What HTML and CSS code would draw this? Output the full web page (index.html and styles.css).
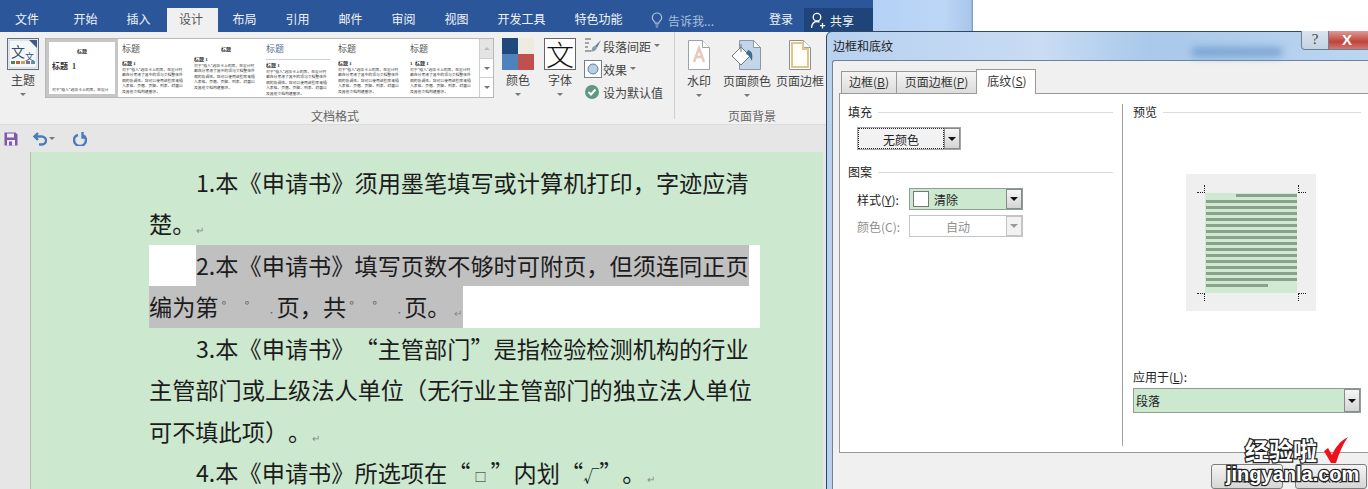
FILE: index.html
```html
<!DOCTYPE html>
<html lang="zh-CN">
<head>
    <meta charset="UTF-8">
    <title>边框和底纹</title>
    <link rel="stylesheet" href="styles.css">
</head>
<body>
    <div class="screen">
        <div class="word">
            <div class="tabs">
                <span class="tab tab-file">文件</span>
                <span class="tab">开始</span>
                <span class="tab">插入</span>
                <span class="tab active">设计</span>
                <span class="tab">布局</span>
                <span class="tab">引用</span>
                <span class="tab">邮件</span>
                <span class="tab">审阅</span>
                <span class="tab">视图</span>
                <span class="tab tab-wide">开发工具</span>
                <span class="tab tab-wide">特色功能</span>
                <span class="tell">
                    <svg width="12" height="16" viewBox="0 0 12 16"><path d="M6 1a4.6 4.6 0 0 0-2.6 8.4c.6.5.8 1 .8 1.8h3.6c0-.8.2-1.3.8-1.8A4.6 4.6 0 0 0 6 1zM4.4 13h3.2M4.8 15h2.4" fill="none" stroke="#a9bfdc" stroke-width="1.2"/></svg>
                    告诉我...
                </span>
                <span class="login">登录</span>
                <span class="share">
                    <svg width="17" height="17" viewBox="0 0 17 17"><path d="M7 9a3.6 3.6 0 1 0 0-7.6A3.6 3.6 0 0 0 7 9zM1.5 16c.4-4 2.500-6.500 5.500-6.500 1 0 1.800.2 2.500.7M12.500 11v5.500M10 13.700h5.200" fill="none" stroke="#fff" stroke-width="1.300"/></svg>
                    共享
                </span>
            </div>

            <div class="ribbon">
                <div class="group group-format">
                    <div class="group-row">
                        <div class="cmd cmd-theme">
                            <svg class="cmd-icon" width="32" height="32" viewBox="0 0 32 32">
                                <rect x=".5" y=".5" width="31" height="31" fill="#fff" stroke="#5f6f7f"/>
                                <rect x="2" y="2" width="28" height="28" fill="#f4f7fa" stroke="#9fb0c0" stroke-width=".6"/>
                                <path d="M22 2h8v8z" fill="#3c5a85"/>
                                <text x="4" y="19" class="theme-big">文</text>
                                <text x="18" y="22" class="theme-small">文</text>
                                <rect x="4" y="23" width="4" height="3" fill="#5d7f4e"/>
                                <rect x="9" y="23" width="4" height="3" fill="#b65f4c"/>
                                <rect x="14" y="23" width="4" height="3" fill="#c9a24d"/>
                                <rect x="19" y="23" width="4" height="3" fill="#7b6a98"/>
                                <rect x="24" y="23" width="4" height="3" fill="#5d8fa6"/>
                            </svg>
                            <span class="cmd-label">主题</span>
                            <i class="caret"></i>
                        </div>
                        <div class="gallery">
                            <div class="thumb thumb-on">
                                <b class="t-center">标题</b>
                                <b class="t-h1 t-wide">标题 &nbsp;1</b>
                                <p class="t-body t-foot">对于“插入”选项卡上的库&#xFF0C;在设计</p>
                            </div>
                            <div class="thumb">
                                <span class="t-title">标题</span>
                                <b class="t-h1">标题 1</b>
                                <p class="t-body">对于“插入”选项卡上的库&#xFF0C;在设计时都充分考虑了其中的项与文档整体外观的协调性。您可以使用这些库来插入表格、页眉、页脚、列表、封面以及其他文档构建基块。</p>
                            </div>
                            <div class="thumb">
                                <b class="t-center">标题</b>
                                <b class="t-h1">标题 1</b>
                                <p class="t-body">对于“插入”选项卡上的库&#xFF0C;在设计时都充分考虑了其中的项与文档整体外观的协调性。您可以使用这些库来插入表格、页眉、页脚、列表、封面以及其他文档构建基块。</p>
                            </div>
                            <div class="thumb">
                                <span class="t-title t-rule">标题</span>
                                <b class="t-h1">标题 1</b>
                                <p class="t-body">对于“插入”选项卡上的库&#xFF0C;在设计时都充分考虑了其中的项与文档整体外观的协调性。您可以使用这些库来插入表格、页眉、页脚、列表、封面以及其他文档构建基块。</p>
                            </div>
                            <div class="thumb">
                                <span class="t-title">标题</span>
                                <b class="t-h1">标题 1</b>
                                <p class="t-body">对于“插入”选项卡上的库&#xFF0C;在设计时都充分考虑了其中的项与文档整体外观的协调性。您可以使用这些库来插入表格、页眉、页脚、列表、封面以及其他文档构建基块。</p>
                            </div>
                            <div class="thumb">
                                <span class="t-title">标题</span>
                                <b class="t-h1">1 &nbsp;标题 1</b>
                                <p class="t-body">对于“插入”选项卡上的库&#xFF0C;在设计时都充分考虑了其中的项与文档整体外观的协调性。您可以使用这些库来插入表格、页眉、页脚、列表、封面以及其他文档构建基块。</p>
                            </div>
                            <div class="gallery-scroll">
                                <span class="scroll-btn scroll-top"><i class="caret caret-up"></i></span>
                                <span class="scroll-btn"><i class="caret"></i></span>
                                <span class="scroll-btn scroll-more"><i class="caret"></i></span>
                            </div>
                        </div>
                        <div class="cmd cmd-colors">
                            <div class="swatches">
                                <i class="sw-navy"></i><i class="sw-cream"></i><i class="sw-blue"></i><i class="sw-red"></i>
                            </div>
                            <span class="cmd-label">颜色</span>
                            <i class="caret"></i>
                        </div>
                        <div class="cmd cmd-font">
                            <div class="font-box">文</div>
                            <span class="cmd-label">字体</span>
                            <i class="caret"></i>
                        </div>
                        <div class="side-cmds">
                            <div class="side-cmd">
                                <svg width="18" height="18" viewBox="0 0 18 18"><path d="M1 2h6M1 6h4M1 10h3M1 14h6" stroke="#555" stroke-width="1" fill="none"/><path d="M17 3l-6 6 2 2z" fill="#6a7f96"/><path d="M11 9c-2 0-3 2-3 3s-1 2-2 2c2 1 5 1 7-3z" fill="#8a9aaa"/></svg>
                                段落间距 <i class="caret caret-inline"></i>
                            </div>
                            <div class="side-cmd side-effect">
                                <svg width="18" height="18" viewBox="0 0 18 18"><rect x=".5" y=".5" width="17" height="17" fill="#fff" stroke="#70808f"/><circle cx="9" cy="9" r="5" fill="#b9cfe6" stroke="#5e7c9e"/></svg>
                                效果 <i class="caret caret-inline"></i>
                            </div>
                            <div class="side-cmd side-default">
                                <svg width="16" height="16" viewBox="0 0 16 16"><circle cx="8" cy="8" r="7" fill="#5f9684"/><path d="M4.500 8l2.500 2.500 4.500-5" fill="none" stroke="#fff" stroke-width="2"/></svg>
                                设为默认值
                            </div>
                        </div>
                    </div>
                    <div class="group-name">文档格式</div>
                </div>

                <div class="group group-page">
                    <div class="group-row">
                        <div class="cmd cmd-mark">
                            <svg class="cmd-icon" width="22" height="30" viewBox="0 0 22 30"><path d="M.5.500h14l7 7v22H.5z" fill="#fff" stroke="#9aa3ac"/><path d="M14.500.500v7h7" fill="#fff" stroke="#9aa3ac"/><path d="M6 22l5-14 5 14M8 17h6" fill="none" stroke="#e9c9bd" stroke-width="2.500"/></svg>
                            <span class="cmd-label">水印</span>
                            <i class="caret"></i>
                        </div>
                        <div class="cmd cmd-pagecolor">
                            <svg class="cmd-icon" width="32" height="30" viewBox="0 0 32 30"><path d="M8.500.500h14l7 7v22h-21z" fill="#c3d5e8" stroke="#8a98a6"/><path d="M22.500.500v7h7z" fill="#fff" stroke="#8a98a6"/><path d="M1 16l9-9 9 9-9 9z" fill="#fff" stroke="#6f7a85"/><path d="M10 4v8" stroke="#6f7a85"/><path d="M17 10c4 1 5 4 4 11-2-3-3-6-6-7z" fill="#3f6b96"/></svg>
                            <span class="cmd-label">页面颜色</span>
                            <i class="caret"></i>
                        </div>
                        <div class="cmd cmd-border">
                            <svg class="cmd-icon" width="22" height="30" viewBox="0 0 22 30"><path d="M.5.500h14l7 7v22H.5z" fill="#fffdf6" stroke="#8f8f8f"/><path d="M14.500.500v7h7" fill="#fff" stroke="#9aa3ac"/><path d="M3 3h11v6h5v18H3z" fill="none" stroke="#e0c68e" stroke-width="2"/></svg>
                            <span class="cmd-label">页面边框</span>
                        </div>
                    </div>
                    <div class="group-name">页面背景</div>
                </div>
            </div>

            <div class="qat">
                <svg width="14" height="14" viewBox="0 0 14 14"><path d="M.5.500h11l2 2v11H.5z" fill="#7d5aa6"/><rect x="3" y="1.500" width="7" height="4" fill="#efe9f5"/><rect x="3" y="8" width="8" height="5.500" fill="#efe9f5"/><rect x="5" y="9.500" width="3" height="4" fill="#7d5aa6"/></svg>
                <svg class="qat-undo" width="14" height="14" viewBox="0 0 14 14"><path d="M1.500 4.500h7c3 0 4.500 2 4.500 4s-1.500 4-4 4H6M5 1L1.500 4.500 5 8" fill="none" stroke="#4a7db8" stroke-width="2.400"/></svg>
                <i class="caret caret-qat"></i>
                <svg class="qat-redo" width="14" height="14" viewBox="0 0 14 14"><path d="M5 3C2.500 3.800 1 5.800 1 8a6 6 0 0 0 12 0c0-2.200-1.500-4.200-3.500-5M9.500 0v5.500H13" fill="none" stroke="#4a7db8" stroke-width="2.400"/></svg>
            </div>

            <div class="doc">
                <div class="page">
                    <div class="line indent">1.本《申请书》须用墨笔填写或计算机打印&#xFF0C;字迹应清</div>
                    <div class="line">楚。<span class="para-mark">↵</span></div>
                    <div class="selected">
                        <div class="line indent"><span class="sel">2.本《申请书》填写页数不够时可附页&#xFF0C;但须连同正页</span></div>
                        <div class="line"><span class="sel">编为第<span class="ph">°</span><span class="ph">°</span><span class="ph ph-dot">·</span>页&#xFF0C;共<span class="ph">°</span><span class="ph">°</span><span class="ph ph-dot">·</span>页。<span class="para-mark mark-end">↵</span></span></div>
                    </div>
                    <div class="line indent">3.本《申请书》“主管部门”是指检验检测机构的行业</div>
                    <div class="line">主管部门或上级法人单位&#xFF08;无行业主管部门的独立法人单位</div>
                    <div class="line">可不填此项&#xFF09;。<span class="para-mark">↵</span></div>
                    <div class="line indent">4.本《申请书》所选项在“<span class="tiny">□</span>”内划“<span class="tiny tiny-check">√</span>”。<span class="para-mark">↵</span></div>
                </div>
            </div>
        </div>
        <div class="aero"></div>
    </div>

    <div class="dialog">
        <div class="dialog-title">
            <span>边框和底纹</span>
            <i class="title-blur"></i>
            <div class="title-btns">
                <span class="btn-help">?</span>
                <span class="btn-close">X</span>
            </div>
        </div>
        <div class="dialog-body">
            <div class="dialog-tabs">
                <span class="dtab dtab-one">边框(<u>B</u>)</span>
                <span class="dtab dtab-two">页面边框(<u>P</u>)</span>
                <span class="dtab dtab-on">底纹(<u>S</u>)</span>
            </div>
            <div class="panel">
                <div class="col-left">
                    <div class="legend">填充</div>
                    <div class="combo combo-fill">
                        <span class="combo-text focus">无颜色</span>
                        <span class="combo-btn"><i class="arrow"></i></span>
                    </div>
                    <div class="legend legend-two">图案</div>
                    <div class="field field-style">
                        <label>样式(<u>Y</u>):</label>
                        <div class="combo combo-green">
                            <span class="combo-text combo-left"><i class="chip"></i>清除</span>
                            <span class="combo-btn"><i class="arrow"></i></span>
                        </div>
                    </div>
                    <div class="field field-color">
                        <label>颜色(C):</label>
                        <div class="combo combo-off">
                            <span class="combo-text">自动</span>
                            <span class="combo-btn"><i class="arrow"></i></span>
                        </div>
                    </div>
                </div>
                <div class="col-right">
                    <div class="legend">预览</div>
                    <div class="preview">
                        <div class="preview-page">
                            <i class="crop crop-tl"></i><i class="crop crop-tr"></i><i class="crop crop-bl"></i><i class="crop crop-br"></i>
                            <i class="pl pl-first"></i><i class="pl"></i><i class="pl"></i><i class="pl"></i><i class="pl"></i>
                            <i class="pl"></i><i class="pl"></i><i class="pl"></i><i class="pl"></i><i class="pl"></i>
                            <i class="pl"></i><i class="pl"></i><i class="pl"></i><i class="pl"></i><i class="pl"></i><i class="pl pl-last"></i>
                        </div>
                    </div>
                    <label class="apply-label">应用于(<u>L</u>):</label>
                    <div class="combo combo-green combo-apply">
                        <span class="combo-text combo-left">段落</span>
                        <span class="combo-btn"><i class="arrow"></i></span>
                    </div>
                </div>
            </div>
            <div class="dialog-foot">
                <span class="push-btn push-ok">确定</span>
                <span class="push-btn push-cancel">取消</span>
            </div>
        </div>
    </div>

    <div class="watermark">
        <div class="wm-top">经验啦<svg width="24" height="27" viewBox="0 0 24 27"><path d="M0 14l4-3 4 7C11 11 16 4 24 0c-5 7-9 16-12 26H7z" fill="#f0101c"/></svg></div>
        <div class="wm-url">jingyanla.com</div>
    </div>
</body>
</html>
```

FILE: styles.css
```css
* {
    box-sizing: border-box;
}
html, body {
    margin: 0;
    height: 100%;
    overflow: hidden;
}
body {
    position: relative;
    background: #fff;
    font-family: "Noto Sans CJK SC", "Noto Sans", sans-serif;
    font-size: 12px;
    color: #444;
    text-spacing-trim: space-all;
}
i {
    font-style: normal;
}
.screen {
    display: flex;
    height: 489px;
}
.word {
    width: 873px;
    display: flex;
    flex-direction: column;
    background: #e6e6e6;
}
.aero {
    width: 100px;
    background: linear-gradient(90deg, #b4d2f6, #bcd6f6 70%, #a9c6ea 98%, #6f90bb);
}

/* ribbon tabs */
.tabs {
    height: 32px;
    background: #2b579a;
    display: flex;
    align-items: flex-end;
    color: #f0f4fa;
}
.tab {
    width: 53px;
    height: 24px;
    line-height: 22px;
    text-align: center;
    flex: none;
}
.tab-file {
    width: 54px;
    margin-right: 5px;
}
.tab-wide {
    width: 77px;
}
.tab.active {
    background: #f0f0f0;
    color: #555;
    margin-left: 2px;
    width: 51px;
    padding-right: 3px;
}
.tell {
    display: flex;
    align-items: center;
    gap: 5px;
    height: 24px;
    margin-left: 14px;
    width: 118px;
    flex: none;
    color: #a9bfdc;
}
.login {
    width: 35px;
    height: 24px;
    line-height: 22px;
    flex: none;
}
.share {
    width: 69px;
    height: 24px;
    background: #1f4479;
    display: flex;
    align-items: center;
    gap: 3px;
    padding-left: 6px;
    flex: none;
}

/* ribbon body */
.ribbon {
    height: 93px;
    background: #f0f0f0;
    display: flex;
    border-bottom: 1px solid #dcdcdc;
}
.group {
    display: flex;
    flex-direction: column;
    border-right: 1px solid #cfcfcf;
    margin-bottom: 5px;
}
.group-format {
    width: 675px;
    padding-left: 7px;
}
.group-page {
    width: 198px;
    border-right: 0;
}
.group-row {
    display: flex;
    height: 75px;
    padding-top: 6px;
    flex: none;
}
.group-name {
    text-align: center;
    color: #666;
    line-height: 16px;
    padding-right: 11px;
    margin-top: 1px;
    flex: none;
}
.group-page .group-name {
    padding-right: 44px;
}
.cmd {
    display: flex;
    flex-direction: column;
    align-items: center;
    flex: none;
}
.cmd-icon {
    display: block;
}
.cmd-label {
    line-height: 17px;
    margin-top: 1px;
    white-space: nowrap;
}
.cmd-theme {
    width: 32px;
}
.theme-big {
    font-size: 14px;
    fill: #35506e;
}
.theme-small {
    font-size: 9px;
    fill: #35506e;
}
.caret {
    display: block;
    width: 0;
    height: 0;
    border-left: 3px solid transparent;
    border-right: 3px solid transparent;
    border-top: 3px solid #777;
    margin-top: 5px;
}
.caret-up {
    border-top: 0;
    border-bottom: 3px solid #bbb;
    margin: 0;
}
.caret-inline {
    display: inline-block;
    margin: 0 0 2px 2px;
}
.caret-qat {
    margin: 0 0 0 2px;
}

/* style gallery */
.gallery {
    width: 449px;
    height: 60px;
    margin-left: 6px;
    background: #fff;
    border: 1px solid #b8b8b8;
    display: flex;
    flex: none;
}
.thumb {
    width: 72px;
    height: 58px;
    padding: 4px 4px 0;
    overflow: hidden;
    display: flex;
    flex-direction: column;
    color: #333;
    font-family: "Liberation Serif", "Noto Sans CJK SC", serif;
    flex: none;
}
.thumb-on {
    border: 3px solid #c6c6c6;
    padding: 3px 3px 0;
    position: relative;
}
.t-center {
    text-align: center;
    font-size: 5px;
    line-height: 8px;
    height: 10px;
    margin-top: 3px;
    flex: none;
}
.t-title {
    font-size: 9px;
    line-height: 12px;
    height: 17px;
    color: #555;
    flex: none;
}
.t-rule {
    border-bottom: 1px solid #c8d2dc;
    margin-bottom: 2px;
    color: #56708c;
}
.t-h1 {
    font-size: 5px;
    line-height: 7px;
    flex: none;
}
.t-wide {
    font-size: 8px;
    line-height: 14px;
    margin-top: 2px;
    margin-bottom: 14px;
}
.t-body {
    margin: 1px 0 0;
    font-size: 3.8px;
    line-height: 5.4px;
    color: #333;
    height: 27px;
    overflow: hidden;
    flex: none;
}
.t-foot {
    height: 6px;
    margin: 0;
    white-space: nowrap;
}
.gallery-scroll {
    width: 15px;
    margin-left: 1px;
    display: flex;
    flex-direction: column;
    border-left: 1px solid #cfcfcf;
}
.scroll-btn {
    flex: 1;
    display: flex;
    align-items: center;
    justify-content: center;
    border-bottom: 1px solid #cfcfcf;
}
.scroll-btn .caret {
    margin: 0;
}
.scroll-top {
    background: #e4e4e4;
}
.scroll-more {
    border-bottom: 0;
}

/* theme commands */
.cmd-colors {
    width: 32px;
    margin-left: 8px;
}
.swatches {
    width: 32px;
    height: 32px;
    display: grid;
    grid-template-columns: 1fr 1fr;
    grid-template-rows: 1fr 1fr;
}
.sw-navy { background: #1f497d; }
.sw-cream { background: #eeece1; }
.sw-blue { background: #4f81bd; }
.sw-red { background: #c0504d; }
.cmd-font {
    width: 32px;
    margin-left: 10px;
}
.font-box {
    width: 32px;
    height: 32px;
    background: #fff;
    border: 1px solid #666;
    color: #111;
    font-weight: 300;
    font-size: 28px;
    line-height: 30px;
    text-align: center;
}
.side-cmds {
    margin: -2px 0 0 8px;
    width: 90px;
    display: flex;
    flex-direction: column;
}
.side-cmd {
    display: flex;
    align-items: center;
    gap: 1px;
    height: 22px;
    white-space: nowrap;
    margin-top: -1px;
}
.side-effect {
    height: 24px;
    margin-top: 0;
}
.side-default {
    gap: 3px;
    height: 24px;
}
.cmd-mark {
    width: 48px;
    padding-top: 2px;
}
.cmd-pagecolor {
    width: 48px;
    padding-top: 2px;
}
.cmd-border {
    width: 50px;
    padding-top: 2px;
    margin-left: 4px;
}
.cmd-mark .cmd-label, .cmd-pagecolor .cmd-label, .cmd-border .cmd-label {
    margin-top: 2px;
}

/* quick access */
.qat {
    height: 27px;
    background: #e6e6e6;
    display: flex;
    align-items: center;
    padding-left: 4px;
}
.qat-undo {
    margin-left: 15px;
}
.qat-redo {
    margin-left: 18px;
}

/* document */
.doc {
    flex: 1;
    padding: 0 50px 0 30px;
    overflow: hidden;
}
.page {
    height: 100%;
    background: #cce8cf;
    border-left: 1px solid #b9b9b9;
    padding: 9.500px 0 0 118px;
    color: #1c1c1c;
    font-size: 23.2px;
}
.line {
    height: 41.5px;
    line-height: 41.5px;
    white-space: nowrap;
}
.indent {
    padding-left: 47px;
}
.selected {
    width: 611px;
    background: #fff;
}
.sel {
    display: inline-block;
    height: 41.5px;
    background: #c0c0c0;
}
.para-mark {
    font-size: 10px;
    color: #888;
    margin-left: 1px;
    vertical-align: -1px;
}
.mark-end {
    margin: 0 1px 0 3px;
}
.ph {
    display: inline-block;
    width: 23px;
    padding-left: 3px;
    font-size: 13px;
    color: #666;
    vertical-align: 5px;
    line-height: 10px;
}
.ph-dot {
    width: 12px;
    font-size: 8px;
    vertical-align: 0;
}
.tiny {
    display: inline-block;
    width: 20px;
    text-align: center;
    font-size: 12px;
    line-height: 20px;
}
.tiny-check {
    width: 16px;
    font-size: 16px;
}

/* dialog */
.dialog {
    position: absolute;
    left: 826px;
    top: 31px;
    width: 544px;
    height: 460px;
    border: 1px solid #33465c;
    border-radius: 6px 0 0 0;
    background: linear-gradient(90deg, #b7d1ef, #c8dcf3 40%, #a9c8ea 60%, #bcd6f2);
    padding: 0 0 0 5px;
    display: flex;
    flex-direction: column;
}
.dialog-title {
    height: 28px;
    position: relative;
    display: flex;
    align-items: center;
    padding: 0 0 2px 1px;
    color: #222;
}
.title-blur {
    position: absolute;
    left: 360px;
    top: 16px;
    width: 90px;
    height: 8px;
    background: #6d9ccc;
    filter: blur(4px);
}
.title-btns {
    position: absolute;
    right: 1px;
    top: -1px;
    display: flex;
    height: 19px;
    color: #444;
}
.btn-help {
    width: 28px;
    border: 1px solid #6e7f92;
    border-top: 0;
    border-radius: 0 0 0 4px;
    background: linear-gradient(#dbe4ee, #c4d2e2);
    text-align: center;
    font-family: "Liberation Serif", serif;
    font-size: 15px;
    line-height: 17px;
}
.btn-close {
    width: 39px;
    background: linear-gradient(#dc9a94, #c0433a 60%, #cf7a72);
    color: #fff;
    font-family: "Liberation Sans", sans-serif;
    font-weight: bold;
    font-size: 15px;
    line-height: 17px;
    padding-left: 13px;
    border-bottom: 1px solid #6e7f92;
}
.dialog-body {
    flex: 1;
    background: #f0f0f0;
    border: 1px solid #6f8299;
    border-right: 0;
    border-radius: 3px 0 0 0;
    padding: 8px 0 0 6px;
    display: flex;
    flex-direction: column;
    color: #222;
}
.dialog-tabs {
    height: 24px;
    display: flex;
    align-items: flex-end;
    padding-left: 2px;
    position: relative;
    z-index: 1;
}
.dtab {
    height: 22px;
    line-height: 20px;
    border: 1px solid #9a9a9a;
    border-right: 0;
    border-bottom: 0;
    background: linear-gradient(#f4f4f4, #dcdcdc);
    text-align: center;
    color: #333;
}
.dtab-one {
    width: 55px;
}
.dtab-two {
    width: 80px;
}
.dtab-on {
    width: 60px;
    height: 25px;
    margin-bottom: -1px;
    background: #fff;
    border-right: 1px solid #9a9a9a;
    line-height: 22px;
    padding-left: 2px;
}
.panel {
    height: 360px;
    width: 540px;
    background: #fff;
    border: 1px solid #9a9a9a;
    border-right: 0;
    padding: 10px 0 6px 0;
    display: grid;
    grid-template-columns: 282px 1fr;
}
.col-left {
    padding: 0 9px 0 8px;
}
.col-right {
    border-left: 1px solid #a0a0a0;
    padding-left: 10px;
}
.legend {
    height: 16px;
    line-height: 16px;
    display: flex;
    align-items: center;
    gap: 6px;
}
.legend::after {
    content: "";
    flex: 1;
    height: 1px;
    background: #dcdcdc;
}
.legend-two {
    margin-top: 14px;
}
.col-right .legend {
    width: 228px;
}
.combo {
    display: flex;
    height: 23px;
    border: 1px solid #a6a6a6;
    background: #f2f2f2;
}
.combo-text {
    flex: 1;
    text-align: center;
    line-height: 21px;
}
.focus {
    border: 1px dotted #222;
}
.combo-left {
    text-align: left;
    padding-left: 3px;
    display: flex;
    align-items: center;
    gap: 5px;
}
.combo-btn {
    width: 16px;
    border: 1px solid #8a8a8a;
    background: linear-gradient(#f6f6f6, #d4d4d4);
    display: flex;
    align-items: center;
    justify-content: center;
    flex: none;
}
.arrow {
    width: 0;
    height: 0;
    border-left: 4px solid transparent;
    border-right: 4px solid transparent;
    border-top: 4px solid #111;
}
.combo-fill {
    width: 104px;
    margin: 7px 0 0 9px;
}
.field {
    display: flex;
    align-items: center;
    margin-left: 9px;
}
.field label {
    width: 52px;
}
.field .combo {
    width: 114px;
    height: 22px;
}
.field-style {
    margin-top: 8px;
}
.field-color {
    margin-top: 5px;
    color: #8f8f8f;
}
.combo-green {
    background: #cce8cf;
    border-color: #8e9e90;
}
.chip {
    width: 16px;
    height: 16px;
    background: #fff;
    border: 1px solid #777;
    flex: none;
}
.combo-off {
    background: #fff;
    border-color: #c4c4c4;
}
.combo-off .combo-btn {
    border-color: #c4c4c4;
    background: #f2f2f2;
}
.combo-off .arrow {
    border-top-color: #9a9a9a;
}
.preview {
    width: 130px;
    height: 137px;
    margin: 54px 0 0 53px;
    background: #efefef;
    padding: 19px 19px 0;
}
.preview-page {
    position: relative;
    width: 92px;
    height: 100px;
    background: #d0e9d2;
    padding-top: 1px;
    display: flex;
    flex-direction: column;
    align-items: flex-end;
    gap: 3px;
}
.pl {
    display: block;
    width: 91px;
    height: 3px;
    background: #89a289;
    flex: none;
}
.pl-first {
    width: 61px;
}
.pl-last {
    width: 91px;
    background: linear-gradient(90deg, #89a289 62px, transparent 62px);
}
.crop {
    position: absolute;
    width: 8px;
    height: 8px;
    border: 0 dotted #222;
}
.crop-tl { left: -8px; top: -8px; border-right-width: 1px; border-bottom-width: 1px; }
.crop-tr { right: -9px; top: -8px; border-left-width: 1px; border-bottom-width: 1px; }
.crop-bl { left: -8px; bottom: -8px; border-right-width: 1px; border-top-width: 1px; }
.crop-br { right: -9px; bottom: -8px; border-left-width: 1px; border-top-width: 1px; }
.apply-label {
    display: block;
    height: 16px;
    line-height: 16px;
    margin-top: 58px;
}
.combo-apply {
    width: 228px;
    height: 25px;
    margin-top: 3px;
}
.combo-apply .combo-text {
    padding-left: 2px;
}
.dialog-foot {
    display: flex;
    padding: 11px 0 0 372px;
    gap: 12px;
}
.push-btn {
    width: 72px;
    height: 25px;
    flex: none;
    border: 1px solid #7d7d7d;
    border-radius: 3px;
    background: linear-gradient(#f4f4f4, #d6d6d6);
    text-align: center;
    line-height: 23px;
    color: #333;
}

/* site watermark, sits over the dialog buttons */
.watermark {
    position: absolute;
    left: 1226px;
    top: 436px;
    width: 130px;
    font-family: "Noto Sans CJK SC", sans-serif;
    font-weight: 700;
    color: #fff;
    -webkit-text-stroke: 2.5px #222;
    paint-order: stroke fill;
}
.wm-top {
    display: flex;
    align-items: flex-end;
    height: 28px;
    padding-left: 19px;
    font-size: 24px;
    line-height: 28px;
    white-space: nowrap;
}
.wm-top svg {
    margin-left: 7px;
    flex: none;
}
.wm-url {
    font-family: "Liberation Sans", sans-serif;
    font-size: 20px;
    line-height: 20px;
    white-space: nowrap;
}
```
